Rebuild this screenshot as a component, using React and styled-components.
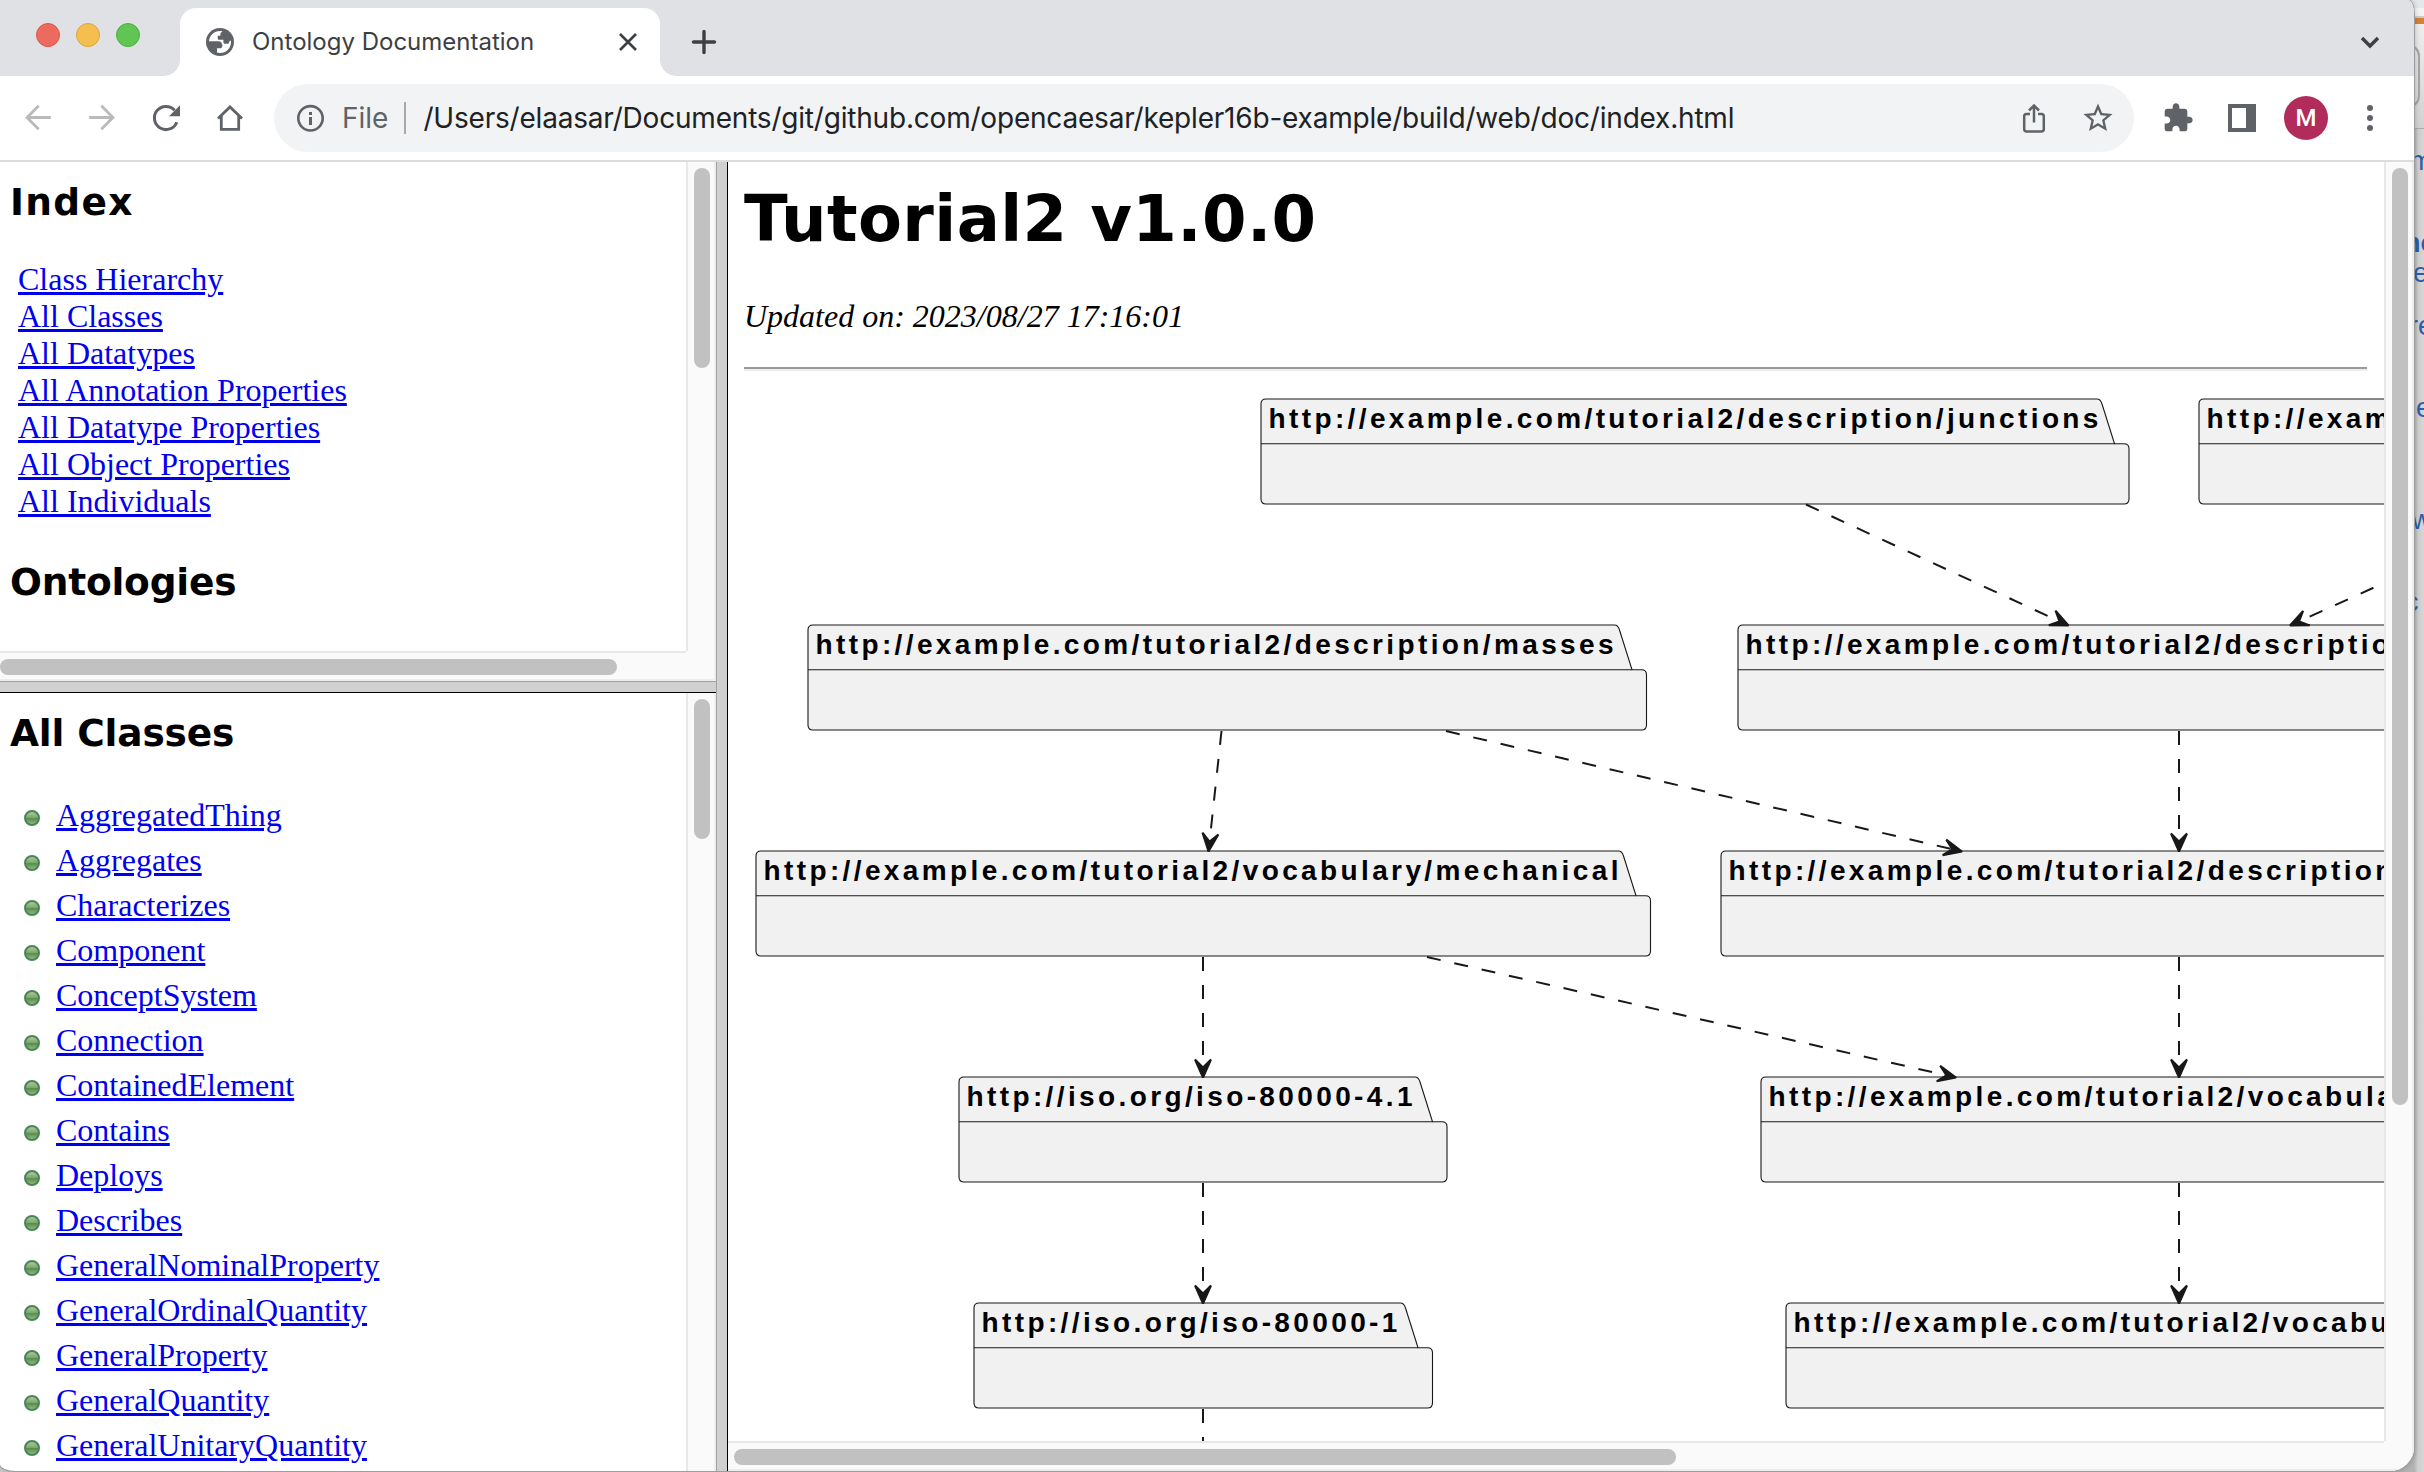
import React from "react";
import styled, { createGlobalStyle } from "styled-components";

const GlobalStyle = createGlobalStyle`
  html, body { margin: 0; padding: 0; }
  body { width: 2424px; height: 1472px; overflow: hidden; background: #cdcdcd; }
  * { box-sizing: border-box; }
`;

const UI = `Inter, Roboto, "Liberation Sans", sans-serif`;
const SERIF = `"Liberation Serif", "Times New Roman", serif`;
const HEADING = `"DejaVu Sans", Verdana, sans-serif`;
const ICON = "#5f6368";

/* ---------- desktop ---------- */

const Desktop = styled.div`
  position: relative;
  width: 2424px;
  height: 1472px;
  overflow: hidden;
  background: #cdcdcd;
`;

const BackWindow = styled.div`
  position: absolute;
  top: 0;
  right: 0;
  width: 34px;
  height: 1472px;
  overflow: hidden;
  background: linear-gradient(90deg, #b4b4b4 24px, #cfcfcf 28px, #d6d6d6 34px);
`;

const BackChrome = styled.div`
  height: 129px;
  border-bottom: 1px solid #a9abae;
  background: linear-gradient(#e6e7e9 0 8px, #f3f3f3 8px 16px, #cccccc 16px 18px, #d87f38 18px 24px, #eeeeee 24px, #d2d2d3 100%);
  padding-top: 44px;
`;

const BackField = styled.div`
  width: 30px;
  height: 64px;
  border: 2px solid #a3a5a9;
  border-left: 0;
  border-radius: 0 12px 12px 0;
`;

const Fragment = styled.div`
  height: 28px;
  margin-top: ${(p) => p.$gap}px;
  padding-left: ${(p) => p.$x}px;
  font: ${(p) => (p.$bold ? 700 : 400)} 27px/28px "Liberation Sans", sans-serif;
  color: #2a5fa9;
  white-space: nowrap;
`;

const Window = styled.div`
  position: relative;
  width: 2414px;
  height: 1471px;
  display: flex;
  flex-direction: column;
  overflow: hidden;
  background: #fff;
  border-radius: 0 6px 24px 16px / 0 14px 24px 7px;
  box-shadow: 0 0 0 1px #9d9d9d, 0 0 6px rgba(0, 0, 0, 0.3);
`;

/* ---------- tab strip ---------- */

const TabStrip = styled.div`
  height: 76px;
  flex: none;
  display: flex;
  background: #dfe1e5;
`;

const Lights = styled.div`
  width: 180px;
  padding: 23px 0 0 36px;
  display: flex;
  gap: 16px;
`;

const Light = styled.span`
  width: 24px;
  height: 24px;
  border-radius: 50%;
  background: ${(p) => p.$fill};
  border: 1px solid ${(p) => p.$edge};
`;

const Tab = styled.div`
  position: relative;
  width: 480px;
  height: 68px;
  margin-top: 8px;
  padding: 0 22px 0 26px;
  display: flex;
  align-items: center;
  background: #fff;
  border-radius: 16px 16px 0 0;
  &::before,
  &::after {
    content: "";
    position: absolute;
    bottom: 0;
    width: 16px;
    height: 16px;
  }
  &::before {
    left: -16px;
    background: radial-gradient(circle at 0 0, transparent 15.5px, #fff 16px);
  }
  &::after {
    right: -16px;
    background: radial-gradient(circle at 100% 0, transparent 15.5px, #fff 16px);
  }
`;

const TabTitle = styled.span`
  margin-left: 18px;
  flex: 1;
  font: 400 24px/30px ${UI};
  color: #3c4043;
  white-space: nowrap;
`;

const NewTab = styled.div`
  flex: 1;
  padding: 28px 0 0 30px;
`;

const TabMenu = styled.div`
  padding: 32px 32px 0 0;
`;

/* ---------- toolbar ---------- */

const Toolbar = styled.div`
  height: 86px;
  flex: none;
  display: flex;
  align-items: center;
  padding: 0 36px 0 22px;
  border-bottom: 2px solid #dcdcdc;
  background: #fff;
`;

const NavButtons = styled.div`
  display: flex;
  gap: 32px;
  width: 252px;
`;

const Omnibox = styled.div`
  width: 1860px;
  height: 68px;
  border-radius: 34px;
  background: #f1f3f4;
  display: flex;
  align-items: center;
  padding: 0 20px;
  font: 400 28px/34px ${UI};
`;

const Scheme = styled.span`
  margin-left: 16px;
  color: #5f6368;
`;

const Separator = styled.span`
  width: 2px;
  height: 32px;
  margin: 0 17px 0 16px;
  background: #a5a8ac;
`;

const Address = styled.span`
  flex: 1;
  color: #202124;
  letter-spacing: -0.2px;
  white-space: nowrap;
`;

const OmniboxActions = styled.span`
  display: flex;
  gap: 32px;
`;

const Actions = styled.div`
  flex: 1;
  margin-left: 28px;
  display: flex;
  align-items: center;
  gap: 28px;
`;

const ActionSlot = styled.span`
  display: flex;
  margin-right: 6px;
`;

const Avatar = styled.span`
  width: 44px;
  height: 44px;
  border-radius: 50%;
  background: #b12b5b;
  color: #fff;
  font: 500 24px/44px Roboto, sans-serif;
  text-align: center;
`;

const Dots = styled.span`
  width: 16px;
  display: flex;
  flex-direction: column;
  align-items: center;
  gap: 4px;
`;

const Dot = styled.span`
  width: 6px;
  height: 6px;
  border-radius: 50%;
  background: #5f6368;
`;

/* ---------- frames ---------- */

const Frameset = styled.div`
  flex: 1;
  min-height: 0;
  display: grid;
  grid-template-columns: 716px 12px 1686px;
`;

const LeftFrames = styled.div`
  display: grid;
  grid-template-rows: 519px 12px 778px;
  min-height: 0;
`;

const VerticalDivider = styled.div`
  background: #d0d0d0;
  border-left: 1px solid #a3a3a3;
  border-right: 1px solid #000;
`;

const HorizontalDivider = styled.div`
  background: #d0d0d0;
  border-top: 1px solid #a3a3a3;
  border-bottom: 1px solid #000;
`;

const Frame = styled.div`
  display: grid;
  grid-template-columns: minmax(0, 1fr) 30px;
  grid-template-rows: minmax(0, 1fr) ${(p) => (p.$horizontal ? "30px" : "")};
  min-height: 0;
  overflow: hidden;
`;

const Pane = styled.div`
  overflow: hidden;
  padding: ${(p) => p.$pad};
`;

const VerticalTrack = styled.div`
  background: #fafafa;
  border-left: 2px solid #e8e8e8;
  border-right: 2px solid #ededed;
  padding: 6px 0 0 6px;
`;

const HorizontalTrack = styled.div`
  background: #fafafa;
  border-top: 2px solid #e8e8e8;
  border-bottom: 2px solid #ededed;
  padding: 6px 0 0 ${(p) => p.$inset || 0}px;
`;

const Corner = styled.div`
  background: #fafafa;
  border-right: 2px solid #ededed;
  border-bottom: 2px solid #ededed;
`;

const Thumb = styled.div`
  width: ${(p) => p.$w}px;
  height: ${(p) => p.$h}px;
  border-radius: 8px;
  background: #c1c1c1;
`;

const SectionTitle = styled.h2`
  margin: ${(p) => p.$top || 0}px 0 0;
  font: 700 37.5px/44px ${HEADING};
  letter-spacing: ${(p) => p.$spacing || 0}px;
  color: #000;
`;

const Link = styled.a`
  font: 400 32px/37px ${SERIF};
  color: #0000ee;
  text-decoration: underline;
  text-decoration-thickness: 3px;
  text-underline-offset: 2px;
  white-space: nowrap;
`;

const IndexLinks = styled.div`
  margin: 37px 0 0 8px;
  display: flex;
  flex-direction: column;
  align-items: flex-start;
`;

const ClassList = styled.ul`
  list-style: none;
  margin: 38px 0 0;
  padding: 0 0 0 14px;
`;

const ClassItem = styled.li`
  height: 45px;
  display: flex;
  align-items: center;
  gap: 16px;
`;

const Bullet = styled.span`
  width: 16px;
  height: 16px;
  margin-top: 5px;
  border-radius: 50%;
  border: 2px solid #4a8558;
  background: linear-gradient(#a9c99a 0%, #7faa70 45%, #5b8b51 55%, #8cbb7c 100%);
`;

const PageTitle = styled.h1`
  margin: 0;
  font: 700 64px/75px ${HEADING};
  letter-spacing: 0.4px;
  color: #000;
  white-space: nowrap;
`;

const Updated = styled.p`
  margin: 41px 0 0;
  font: italic 400 32px/37px ${SERIF};
  color: #000;
`;

const Rule = styled.hr`
  width: 1623px;
  height: 4px;
  margin: 32px 0 0;
  border: 0;
  border-top: 2px solid #9a9a9a;
  border-bottom: 2px solid #eeeeee;
`;

const Diagram = styled.svg`
  display: block;
  margin-left: -16px;
  text {
    font: 700 28px "Liberation Sans", Arial, sans-serif;
    letter-spacing: 3.38px;
    fill: #000;
  }
`;

/* ---------- data ---------- */

const indexLinks = [
  "Class Hierarchy",
  "All Classes",
  "All Datatypes",
  "All Annotation Properties",
  "All Datatype Properties",
  "All Object Properties",
  "All Individuals",
];

const classes = [
  "AggregatedThing",
  "Aggregates",
  "Characterizes",
  "Component",
  "ConceptSystem",
  "Connection",
  "ContainedElement",
  "Contains",
  "Deploys",
  "Describes",
  "GeneralNominalProperty",
  "GeneralOrdinalQuantity",
  "GeneralProperty",
  "GeneralQuantity",
  "GeneralUnitaryQuantity",
];

const packages = [
  { x: 1261, y: 399, right: 2129, label: "http://example.com/tutorial2/description/junctions" },
  { x: 2199, y: 399, right: 3000, label: "http://exam" },
  { x: 808, y: 625, right: 1646.5, label: "http://example.com/tutorial2/description/masses" },
  { x: 1738, y: 625, right: 3000, label: "http://example.com/tutorial2/descriptio" },
  { x: 756, y: 851, right: 1650.5, label: "http://example.com/tutorial2/vocabulary/mechanical" },
  { x: 1721, y: 851, right: 3000, label: "http://example.com/tutorial2/description" },
  { x: 959, y: 1077, right: 1447, label: "http://iso.org/iso-80000-4.1" },
  { x: 1761, y: 1077, right: 3000, label: "http://example.com/tutorial2/vocabula" },
  { x: 974, y: 1303, right: 1432.5, label: "http://iso.org/iso-80000-1" },
  { x: 1786, y: 1303, right: 3000, label: "http://example.com/tutorial2/vocabu" },
];

const edges = [
  [1806, 504.5, 2068.5, 625.5],
  [2552, 507, 2290, 625.5],
  [1221.5, 731, 1208.5, 851.5],
  [1446, 731, 1962, 851.5],
  [2179, 731, 2179, 851.5],
  [1203, 957, 1203, 1077.5],
  [1427, 957, 1956, 1077.5],
  [2179, 957, 2179, 1077.5],
  [2179, 1183, 2179, 1303.5],
  [1203, 1183, 1203, 1303.5],
  [1203, 1409, 1203, 1529],
];

/* ---------- drawings ---------- */

function Package({ x, y, right, label }) {
  const mid = y + 44.7;
  const bottom = y + 105;
  const slope = right - 32;
  const foot = right - 14.5;
  const d =
    `M${x + 5},${y} H${slope} Q${slope + 3.5},${y} ${slope + 5},${y + 5} L${foot},${mid} H${right - 5} ` +
    `Q${right},${mid} ${right},${mid + 5} V${bottom - 5} Q${right},${bottom} ${right - 5},${bottom} ` +
    `H${x + 5} Q${x},${bottom} ${x},${bottom - 5} V${y + 5} Q${x},${y} ${x + 5},${y} Z`;
  return (
    <g>
      <path d={d} fill="#f1f1f1" stroke="#181818" strokeWidth="1.1" />
      <line x1={x} y1={mid} x2={foot} y2={mid} stroke="#181818" strokeWidth="1.1" />
      <text x={x + 7.5} y={y + 29}>{label}</text>
    </g>
  );
}

function Edge({ points: [x1, y1, x2, y2] }) {
  const angle = (Math.atan2(y2 - y1, x2 - x1) * 180) / Math.PI;
  const length = Math.hypot(x2 - x1, y2 - y1);
  return (
    <g transform={`translate(${x1} ${y1}) rotate(${angle})`} stroke="#181818">
      <line x1="0" y1="0" x2={length - 8} y2="0" strokeWidth="2" strokeDasharray="14 14" />
      <path
        d={`M${length},0 L${length - 18},-8 L${length - 10},0 L${length - 18},8 Z`}
        fill="#181818"
        strokeWidth="2"
        strokeLinejoin="miter"
        strokeMiterlimit="2"
      />
    </g>
  );
}

function GlobeIcon() {
  return (
    <svg width="28" height="28" viewBox="0 0 28 28">
      <circle cx="14" cy="14" r="14" fill={ICON} />
      <path
        d="M3 13.2C3.4 7.4 8 3.1 14 3c1 0 1.6.1 2.2.2v.6c-1.2.6-1.8 1.5-1.8 2.6v1.3h-2.7v2.7c0 .8.6 1.3 1.3 1.3h4.4v2.6c0 .9.7 1.5 1.6 1.5h2.6c.8 0 1.4-.6 1.4-1.4 0-1 .8-1.7 2-1.7v1.3c0 6.2-4.8 11-11 11-1.1 0-2.1-.2-3-.5v-4.2h2.6c1.6 0 2.8-1 2.8-2.6 0-2.6-1.4-4.5-4-4.5z"
        fill="#fff"
      />
    </svg>
  );
}

function Arrow({ flip }) {
  return (
    <svg width="32" height="32" viewBox="0 0 32 32" fill="none" stroke="#bababa" strokeWidth="2.8">
      <g transform={flip ? "translate(32 0) scale(-1 1)" : undefined}>
        <path d="M28.8 15.5H5M16.7 3.8L5 15.5L16.7 27.2" />
      </g>
    </svg>
  );
}

function ReloadIcon() {
  return (
    <svg width="32" height="32" viewBox="0 0 32 32">
      <path d="M26.8 20.2A11.6 11.6 0 1 1 24.6 8.2" fill="none" stroke={ICON} strokeWidth="3" />
      <path d="M30 3.2V14.2H19z" fill={ICON} />
    </svg>
  );
}

function HomeIcon() {
  return (
    <svg width="32" height="32" viewBox="0 0 32 32" fill="none" stroke={ICON} strokeWidth="2.8">
      <path d="M4 16.6L16 5L28 16.6" />
      <path d="M7.3 14V27.4H24.7V14" />
    </svg>
  );
}

function InfoIcon() {
  return (
    <svg width="32" height="32" viewBox="0 0 32 32">
      <circle cx="16.5" cy="16.3" r="12.2" fill="none" stroke={ICON} strokeWidth="2.6" />
      <path d="M15 9.9h3v3h-3zM15 14.9h3v8h-3z" fill={ICON} />
    </svg>
  );
}

function ShareIcon() {
  return (
    <svg width="32" height="32" viewBox="0 0 32 32" fill="none" stroke={ICON} strokeWidth="2.5">
      <path d="M12 12H8.5Q6.2 12 6.2 14.3V27Q6.2 29.5 8.7 29.5H23.3Q25.8 29.5 25.8 27V14.3Q25.8 12 23.5 12H20" />
      <path d="M16 20.5V4M11 8.5L16 3.5L21 8.5" />
    </svg>
  );
}

function StarIcon() {
  return (
    <svg width="32" height="32" viewBox="0 0 24 24" fill={ICON}>
      <path transform="translate(12 12) scale(1.09) translate(-12 -12)" d="M22 9.24l-7.19-.62L12 2 9.19 8.63 2 9.24l5.46 4.73L5.82 21 12 17.27 18.18 21l-1.63-7.03L22 9.24zM12 15.4l-3.76 2.27 1-4.28-3.32-2.88 4.38-.38L12 6.1l1.71 4.04 4.38.38-3.32 2.88 1 4.28L12 15.4z" />
    </svg>
  );
}

function PuzzleIcon() {
  return (
    <svg width="32" height="32" viewBox="0 0 24 24" fill={ICON}>
      <path d="M20.5 11H19V7c0-1.1-.9-2-2-2h-4V3.5C13 2.12 11.88 1 10.5 1S8 2.12 8 3.5V5H4c-1.1 0-1.99.9-1.99 2v3.8H3.5c1.49 0 2.7 1.21 2.7 2.7s-1.21 2.7-2.7 2.7H2V20c0 1.1.9 2 2 2h3.8v-1.5c0-1.49 1.21-2.7 2.7-2.7 1.49 0 2.7 1.21 2.7 2.7V22H17c1.1 0 2-.9 2-2v-4h1.5c1.38 0 2.5-1.12 2.5-2.5S21.88 11 20.5 11z" />
    </svg>
  );
}

function SidePanelIcon() {
  return (
    <svg width="28" height="28" viewBox="0 0 28 28">
      <path fillRule="evenodd" d="M0 0H28V28H0zM4 4V24H18V4z" fill={ICON} />
    </svg>
  );
}

function BrowserChrome() {
  return (
    <>
      <TabStrip>
        <Lights>
          <Light $fill="#ed6a5e" $edge="#d8584c" />
          <Light $fill="#f5bf4f" $edge="#d9a440" />
          <Light $fill="#61c554" $edge="#4fae42" />
        </Lights>
        <Tab>
          <GlobeIcon />
          <TabTitle>Ontology Documentation</TabTitle>
          <svg width="20" height="20" viewBox="0 0 20 20" stroke="#3c4043" strokeWidth="2.6">
            <path d="M2 2L18 18M18 2L2 18" />
          </svg>
        </Tab>
        <NewTab>
          <svg width="28" height="28" viewBox="0 0 28 28" stroke="#3c4043" strokeWidth="3.4" strokeLinecap="round">
            <path d="M14 3.5V24.5M3.5 14H24.5" />
          </svg>
        </NewTab>
        <TabMenu>
          <svg width="24" height="20" viewBox="0 0 24 20" fill="none" stroke="#3c4043" strokeWidth="3.4">
            <path d="M4 6L12 14L20 6" />
          </svg>
        </TabMenu>
      </TabStrip>
      <Toolbar>
        <NavButtons>
          <Arrow />
          <Arrow flip />
          <ReloadIcon />
          <HomeIcon />
        </NavButtons>
        <Omnibox>
          <InfoIcon />
          <Scheme>File</Scheme>
          <Separator />
          <Address>/Users/elaasar/Documents/git/github.com/opencaesar/kepler16b-example/build/web/doc/index.html</Address>
          <OmniboxActions>
            <ShareIcon />
            <StarIcon />
          </OmniboxActions>
        </Omnibox>
        <Actions>
          <ActionSlot>
            <PuzzleIcon />
          </ActionSlot>
          <SidePanelIcon />
          <ActionSlot>
            <Avatar>M</Avatar>
          </ActionSlot>
          <Dots>
            <Dot />
            <Dot />
            <Dot />
          </Dots>
        </Actions>
      </Toolbar>
    </>
  );
}

export default function App() {
  return (
    <Desktop>
      <GlobalStyle />
      <BackWindow>
        <BackChrome>
          <BackField />
        </BackChrome>
        <Fragment $gap={18} $x={20}>m</Fragment>
        <Fragment $gap={54} $x={14} $bold>no</Fragment>
        <Fragment $gap={2} $x={23}>e</Fragment>
        <Fragment $gap={25} $x={19}>re</Fragment>
        <Fragment $gap={54} $x={26}>e</Fragment>
        <Fragment $gap={84} $x={22}>w</Fragment>
        <Fragment $gap={54} $x={15}>c</Fragment>
      </BackWindow>
      <Window>
        <BrowserChrome />
        <Frameset>
          <LeftFrames>
            <Frame $horizontal>
              <Pane $pad="18px 0 0 10px">
                <SectionTitle $spacing={1.3}>Index</SectionTitle>
                <IndexLinks>
                  {indexLinks.map((name) => (
                    <Link key={name}>{name}</Link>
                  ))}
                </IndexLinks>
                <SectionTitle $top={40} $spacing={-0.2}>Ontologies</SectionTitle>
              </Pane>
              <VerticalTrack>
                <Thumb $w={16} $h={200} />
              </VerticalTrack>
              <HorizontalTrack>
                <Thumb $w={617} $h={16} />
              </HorizontalTrack>
              <Corner />
            </Frame>
            <HorizontalDivider />
            <Frame>
              <Pane $pad="18px 0 0 10px">
                <SectionTitle $spacing={-0.15}>All Classes</SectionTitle>
                <ClassList>
                  {classes.map((name) => (
                    <ClassItem key={name}>
                      <Bullet />
                      <Link>{name}</Link>
                    </ClassItem>
                  ))}
                </ClassList>
              </Pane>
              <VerticalTrack>
                <Thumb $w={16} $h={140} />
              </VerticalTrack>
            </Frame>
          </LeftFrames>
          <VerticalDivider />
          <Frame $horizontal>
            <Pane $pad="20px 0 0 16px">
              <PageTitle>Tutorial2 v1.0.0</PageTitle>
              <Updated>Updated on: 2023/08/27 17:16:01</Updated>
              <Rule />
              <Diagram width="1656" height="1071" viewBox="728 371 1656 1071">
                {packages.map((p) => (
                  <Package key={`${p.x}-${p.y}`} {...p} />
                ))}
                {edges.map((points) => (
                  <Edge key={points.join()} points={points} />
                ))}
              </Diagram>
            </Pane>
            <VerticalTrack>
              <Thumb $w={16} $h={937} />
            </VerticalTrack>
            <HorizontalTrack $inset={6}>
              <Thumb $w={942} $h={16} />
            </HorizontalTrack>
            <Corner />
          </Frame>
        </Frameset>
      </Window>
    </Desktop>
  );
}
